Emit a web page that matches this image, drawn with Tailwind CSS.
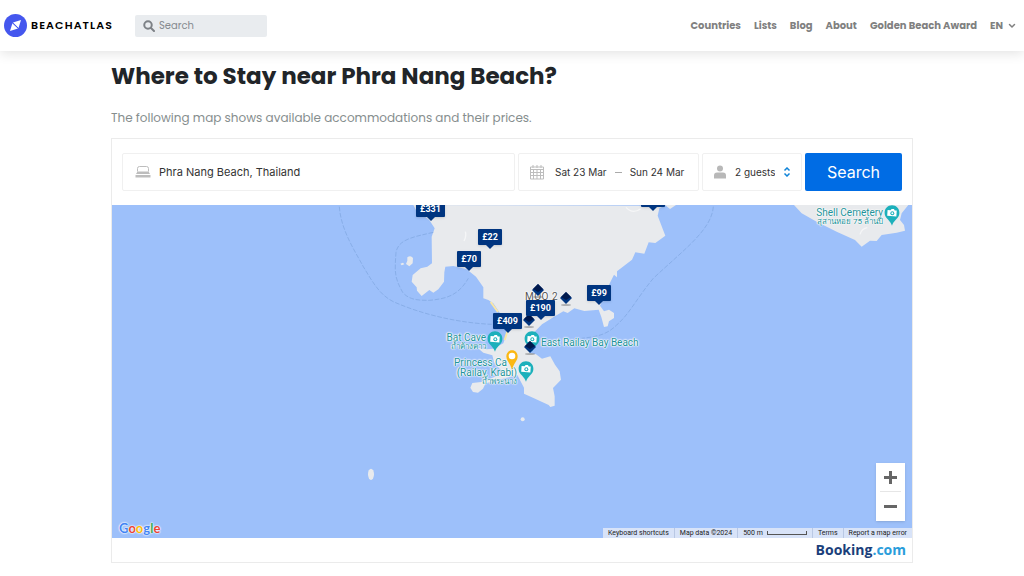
<!DOCTYPE html>
<html lang="en">
<head>
  <meta charset="UTF-8" />
  <meta name="viewport" content="width=device-width, initial-scale=1" />
  <title>Where to Stay near Phra Nang Beach? - Beachatlas</title>
  <script src="https://cdn.jsdelivr.net/npm/@tailwindcss/browser@4"></script>
</head>
<body class="bg-white font-[Poppins,Inter,sans-serif] min-h-screen flex flex-col">
  <svg class="hidden">
    <symbol id="camera-pin" viewBox="0 0 48 64">
      <path d="M24 1C11 1 1.500 11 1.500 24c0 9 5 14 11 21 5 6 9 11 11.500 18 2-7 6-12 11.500-18 6-7 11-12 11-21C46.500 11 37 1 24 1z" fill="#1cb0bb" />
      <path d="M10 16h9l3-4h7l3 4h6v18H10z" fill="#fff" transform="rotate(4 24 24)" />
      <circle cx="25" cy="25" r="6" fill="#1cb0bb" />
      <circle cx="25" cy="25" r="3" fill="#fff" />
    </symbol>
    <symbol id="diamond" viewBox="0 0 14 16">
      <ellipse cx="7" cy="14" rx="5" ry="1" fill="#555" opacity=".4" />
      <path d="M7 1l6 6-6 6-6-6z" fill="#003580" />
      <path d="M2 6l5-5 5 5-5 3z" fill="#00194d" />
    </symbol>
  </svg>

  <header class="h-[51px] shrink-0 flex items-center justify-between pl-1 pr-2 bg-white shadow-[0_2px_12px_rgba(0,0,0,0.12)]">
    <div class="flex items-center">
      <a href="#" class="flex items-center gap-1 text-[11px] font-semibold tracking-widest text-black">
        <svg class="w-[23px] h-[23px]" viewBox="0 0 46 46">
          <circle cx="23" cy="23" r="23" fill="#4557ee" />
          <path d="M34 12L18 17l11 11z" fill="#fff" />
          <path d="M12 34l5-16 11 11z" fill="#fff" />
          <path d="M15 16l16 15" stroke="#4557ee" stroke-width="2" />
        </svg>
        <span>BEACHATLAS</span>
      </a>
      <label class="ml-[22px] flex items-center gap-1 w-[132px] h-[22px] px-2 bg-[#e9ecef] rounded-xs">
        <svg class="w-3 h-3 shrink-0" viewBox="0 0 24 24" fill="none" stroke="#7d8186" stroke-width="4" stroke-linecap="round"><circle cx="10" cy="10" r="7.500" /><path d="M16 16l6 6" /></svg>
        <span class="sr-only">Search</span>
        <input type="search" placeholder="Search" class="w-full min-w-0 h-5 leading-5 text-[10px] text-[#6c757d] placeholder:text-[#868b90] outline-none" />
      </label>
    </div>
    <nav class="flex items-center gap-[13px] text-[10px] font-bold text-[#808080]">
      <a href="#">Countries</a>
      <a href="#">Lists</a>
      <a href="#">Blog</a>
      <a href="#">About</a>
      <a href="#">Golden Beach Award</a>
      <label class="flex items-center">
        <span class="sr-only">Language</span>
        <select class="appearance-none w-[18px] h-5 outline-none"><option>EN</option></select>
        <svg class="w-2 h-2" viewBox="0 0 16 16" fill="none" stroke="#808080" stroke-width="3" stroke-linecap="round" stroke-linejoin="round"><path d="M3 5l5 5 5-5" /></svg>
      </label>
    </nav>
  </header>

  <main class="w-full max-w-[802px] mx-auto">
    <h1 class="mt-[9px] text-[23px] leading-8 font-bold text-[#212529]">Where to Stay near Phra Nang Beach?</h1>
    <p class="mt-4 text-xs leading-5 text-[#868e8e]">The following map shows available accommodations and their prices.</p>

    <section class="mt-2.5 border border-[#ebebeb] font-[Inter,sans-serif]">
      <form class="flex gap-[3px] px-2.5 py-3.5 h-[66px] text-[10px] text-[#333]">
        <label class="flex-1 flex items-center gap-2 px-3 border border-[#f0f0f0] rounded-xs">
          <svg class="w-4 h-4 shrink-0" viewBox="0 0 32 32" fill="#bdbdbd">
            <path d="M5 15V9q0-4 4-4h14q4 0 4 4v6" fill="none" stroke="#bdbdbd" stroke-width="2" />
            <path d="M5 15h22l3 5H2zM1 22h30v5H1z" />
          </svg>
          <span class="sr-only">Destination</span>
          <input type="text" value="Phra Nang Beach, Thailand" class="w-full min-w-0 h-6 leading-6 text-[11px] outline-none" />
        </label>
        <div class="w-[181px] flex items-center gap-2 px-2.5 border border-[#f0f0f0] rounded-xs whitespace-nowrap">
          <svg class="w-4 h-4 mr-0.5 shrink-0" viewBox="0 0 32 32" fill="none" stroke="#bdbdbd" stroke-width="2">
            <path d="M3 6h26v24H3zM3 11h26M3 17h26M3 23h26M9 11v19M16 11v19M23 11v19M8 2v6M16 2v6M24 2v6" />
          </svg>
          <button type="button">Sat 23 Mar</button>
          <span class="w-[7px] h-px bg-[#aaa]"></span>
          <button type="button">Sun 24 Mar</button>
        </div>
        <label class="w-[100px] flex items-center gap-2 px-2.5 border border-[#f0f0f0] rounded-xs">
          <svg class="w-[14px] h-[14px] shrink-0" viewBox="0 0 28 28" fill="#b8b8b8"><circle cx="14" cy="7" r="6" /><path d="M2 27v-6q0-6 6-6h12q6 0 6 6v6z" /></svg>
          <span class="sr-only">Guests</span>
          <select class="appearance-none flex-1 min-w-0 h-6 outline-none"><option>2 guests</option></select>
          <svg class="w-2 h-2.5 shrink-0" viewBox="0 0 16 20" fill="none" stroke="#0f83d8" stroke-width="3"><path d="M3 7l5-5 5 5M3 13l5 5 5-5" /></svg>
        </label>
        <button type="submit" class="w-[97px] rounded-xs bg-[#006ce4] text-base text-white">Search</button>
      </form>

      <div class="relative h-[333px] overflow-hidden bg-[#9dc0fa] font-[Roboto,sans-serif]">
        <div class="absolute top-0 left-1/2 -translate-x-1/2 w-[800px] h-full">
          <svg class="w-full h-full" viewBox="-324 15 2400 999">
            <g fill="#e8eaed">
              <path d="M580 15l8 15 40 30 16 25-9 25 1 80-14 10-20 5-24 20-3 20 15 17 1 10 14 16 23-18 12 8 15-10 17-23 1-28 3-17 24-2 40 10 28 22 22 32v33l15 5 15 10 30 45 12 40-12 35-30 16-20 2-28-5 18 15 27 8 5 20 18 22 15 9-65 28-33 4-6 14 8 13 15 2 15-12 8-16 95-25 20 38v18l30 14 44 20 5 6 13-4v-28l-5-25 24-25-4-25-14-20-14-25-25 7-18-13-18-4-9-29 20-32 25-25 40-25 24-14 13 5 20-14 30 8 43-4 8 22 8 30 11-2 4-15 15-10v-15l-15-10-15 5-12-17 27-63 15-30 9 8v-18l45-35 10-22 27 4 13-34 20 2 30-22-23-60 5-22 16-8z" />
              <path d="M1335 15l15 12 18-12zM1722 15l23 25 45 25 60 30 55 25 20 20 25-18 20 1 15-18 45-7 25-6-3-17-12-15 5-20 20-25z" />
              <path d="M562 172q10-8 17 2l-1 16-10 9-10-7 4-10zM541 191l8-3 4 5-8 3z" />
              <ellipse cx="453" cy="823" rx="9" ry="17" />
              <circle cx="908" cy="658" r="6" />
            </g>
            <path d="M736 95q4 14-4 28M1218 22q20 22 44 4M1920 103q5-17 22-20" fill="none" stroke="#f5f6f7" stroke-width="4" />
            <path d="M812 306l22 30M862 395l-8 25" stroke="#fae7a6" stroke-width="6" />
            <g fill="none" stroke="#88aee8" stroke-width="3" stroke-dasharray="14 5">
              <path d="M358 20c5 70 45 130 72 180 30 50 50 85 90 105 90 40 200 64 295 68" />
              <path d="M640 97c-60 14-104 20-112 60-4 60-5 75 20 120 20 24 50 24 80 24 60-5 90-20 117-66" />
              <path d="M1480 20c-5 70-90 130-180 215-50 60-70 105-110 140-30 30-60 35-105 40" />
            </g>
          </svg>

          <!-- place names -->
          <div class="absolute inset-0 text-[10px] leading-[10px] text-[#23939a] whitespace-nowrap [text-shadow:0_0_1px_#fff,0_0_1px_#fff,0_0_2px_#fff,0_0_2px_#fff,0_0_2px_#fff]">
            <p class="absolute left-[413px] top-[87px] tracking-wider text-[#555]">MOO 2</p>
            <p class="absolute right-[426px] top-[128px] text-right">Bat Cave<br><span class="block text-[8px] leading-2">ถ้ำค้างคาว</span></p>
            <p class="absolute left-[429px] top-[133px]">East Railay Bay Beach</p>
            <p class="absolute right-[395px] top-[153px] text-right"><span class="pr-2.5">Princess Ca</span><br>(Railay, Krabi)<br><span class="block text-[8px] leading-2">ถ้ำพระนาง</span></p>
            <p class="absolute right-[29px] top-[3px] text-right">Shell Cemetery<br><span class="block text-[8px] leading-2">สุสานหอย 75 ล้านปี</span></p>
          </div>

          <svg class="absolute left-[375px] top-[126px] w-4 h-[21px]"><use href="#camera-pin" /></svg>
          <svg class="absolute left-[412px] top-[126px] w-4 h-[21px]"><use href="#camera-pin" /></svg>
          <svg class="absolute left-[406px] top-[156px] w-4 h-[21px]"><use href="#camera-pin" /></svg>
          <svg class="absolute left-[772px] top-[0px] w-4 h-[21px]"><use href="#camera-pin" /></svg>
          <svg class="absolute left-[394px] top-[145px] w-3 h-[20px]" viewBox="0 0 36 60">
            <path d="M18 1C8 1 1 9 1 19c0 14 12 21 17 40 5-19 17-26 17-40C35 9 28 1 18 1z" fill="#fbb813" />
            <circle cx="18" cy="18" r="10" fill="#fff" />
          </svg>

          <svg class="absolute left-[419px] top-[78px] w-3.5 h-4"><use href="#diamond" /></svg>
          <svg class="absolute left-[447px] top-[86px] w-3.5 h-4"><use href="#diamond" /></svg>
          <svg class="absolute left-[410px] top-[108px] w-3.5 h-4"><use href="#diamond" /></svg>
          <svg class="absolute left-[411px] top-[135px] w-3.5 h-4"><use href="#diamond" /></svg>

          <!-- price pins -->
          <div class="text-[9px] leading-4 font-bold text-white text-center *:absolute *:h-4 *:rounded-[1px] *:bg-[#003580] *:shadow-sm *:after:absolute *:after:left-1/2 *:after:top-full *:after:-translate-x-1/2 *:after:border-x-4 *:after:border-t-4 *:after:border-x-transparent *:after:border-t-[#003580] *:after:content-['']">
            <button type="button" class="left-[304px] top-[-4px] w-[29px]">£331</button>
            <button type="button" class="left-[366px] top-[24px] w-6">£22</button>
            <button type="button" class="left-[345px] top-[46px] w-6">£70</button>
            <button type="button" class="left-[475px] top-[80px] w-6">£99</button>
            <button type="button" class="left-[414px] top-[95px] w-[29px]">£190</button>
            <button type="button" class="left-[381px] top-[108px] w-[29px]">£409</button>
            <button type="button" aria-label="Show price" class="left-[529px] top-[-14px] w-6"></button>
          </div>
        </div>

        <div class="absolute left-[7px] bottom-[2px] text-[13px] leading-4 font-bold font-[Lato,sans-serif] [text-shadow:0_0_1px_#fff,0_0_2px_#fff,0_0_2px_#fff]">
          <span class="text-[#4285f4]">G</span><span class="text-[#ea4335]">o</span><span class="text-[#fbbc05]">o</span><span class="text-[#4285f4]">g</span><span class="text-[#34a853]">l</span><span class="text-[#ea4335]">e</span>
        </div>

        <div class="absolute right-[7px] bottom-[17px] w-[29px] px-1 bg-white shadow-sm divide-y divide-[#e6e6e6]">
          <button type="button" aria-label="Zoom in" class="flex w-full h-[29px] items-center justify-center"><svg class="w-[13px] h-[13px]" viewBox="0 0 13 13" stroke="#666" stroke-width="3"><path d="M0 6.500h13M6.500 0v13" /></svg></button>
          <button type="button" aria-label="Zoom out" class="flex w-full h-[29px] items-center justify-center"><svg class="w-[13px] h-[13px]" viewBox="0 0 13 13" stroke="#666" stroke-width="3"><path d="M0 6.500h13" /></svg></button>
        </div>

        <div class="absolute right-0 bottom-0 flex h-2.5 text-[7px] leading-[10px] text-[#222] bg-[#d8e3f8] divide-x divide-[#b9c8e4] *:px-[5px] whitespace-nowrap">
          <button type="button">Keyboard shortcuts</button>
          <span>Map data ©2024</span>
          <span class="flex items-center gap-1">500 m <span class="w-10 h-1 border-x border-b border-[#555]"></span></span>
          <a href="#">Terms</a>
          <a href="#">Report a map error</a>
        </div>
      </div>

      <div class="h-6 px-1.5 flex items-center justify-end text-sm font-bold font-['Open_Sans',sans-serif]">
        <a href="#" class="text-[#1b3f7b]">Booking<span class="text-[#2a9ddb]">.com</span></a>
      </div>
    </section>
  </main>
</body>
</html>
